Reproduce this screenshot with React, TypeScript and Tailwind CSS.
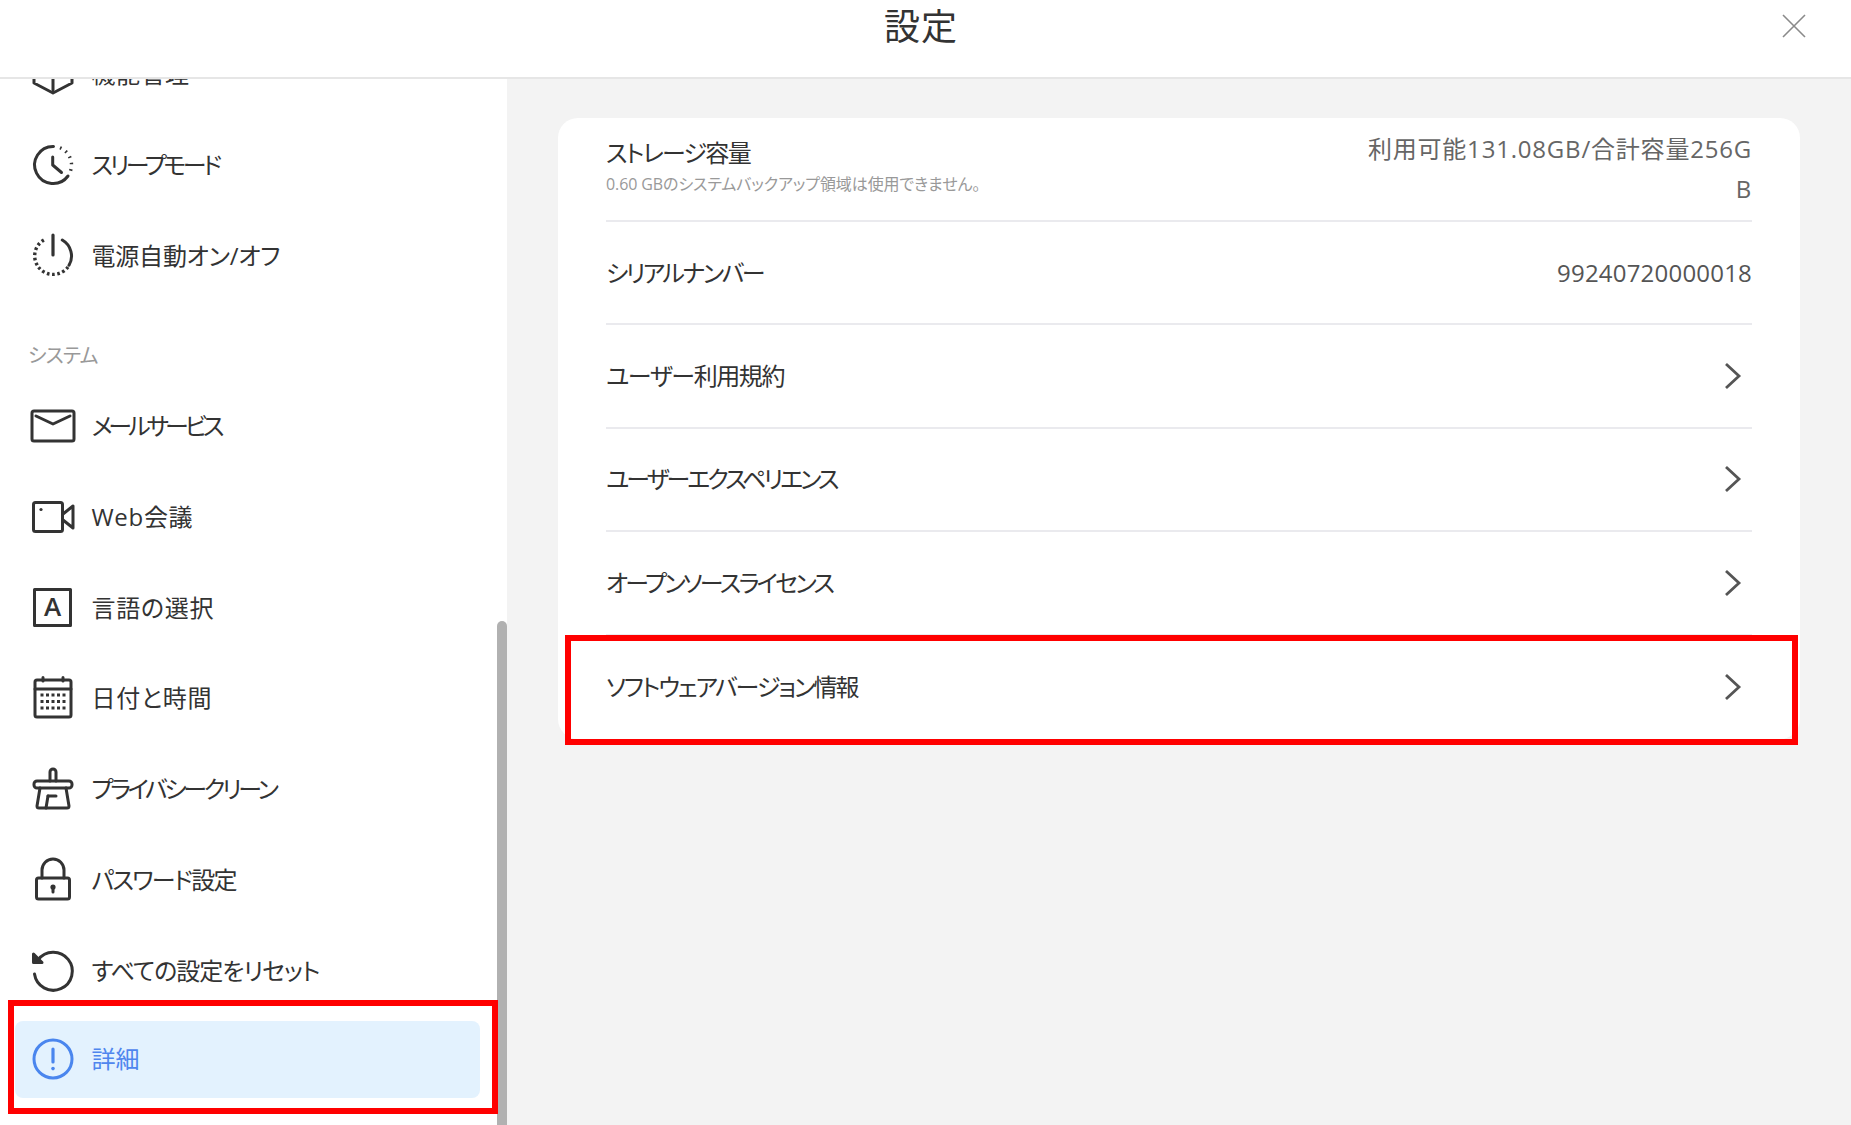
import type { ReactNode } from 'react';

const ink = '#333333';

function Icon({ children, color = ink }: { children: ReactNode; color?: string }) {
  return (
    <svg
      viewBox="0 0 48 48"
      className="h-12 w-12 shrink-0"
      fill="none"
      stroke={color}
      strokeWidth="3"
      strokeLinecap="round"
      strokeLinejoin="round"
    >
      {children}
    </svg>
  );
}

const HexIcon = (
  <Icon>
    <path d="M24 5 L43 14 V33 L24 43 L5 33 V14 Z" />
    <path d="M24 24 V40" />
  </Icon>
);

const SleepIcon = (
  <Icon>
    <path d="M24.5 5.5 A18.5 18.5 0 1 0 39 35" />
    <path d="M31 6.8 A18.5 18.5 0 0 1 41.5 30" strokeDasharray="1.6 4.9" strokeWidth="3.4" strokeLinecap="butt" />
    <path d="M23.7 16 V24 L32.5 31.5" />
  </Icon>
);

const PowerIcon = (
  <Icon>
    <path d="M33.3 8 A18.5 18.5 0 0 1 40 33.3" />
    <path d="M39 35 A18.5 18.5 0 1 1 16.7 7" strokeDasharray="2.6 2.6" strokeWidth="3.4" strokeLinecap="butt" />
    <path d="M24 3 V23" strokeWidth="3.2" />
  </Icon>
);

const MailIcon = (
  <Icon>
    <rect x="3" y="9" width="42" height="30" rx="2" />
    <path d="M7 14 L24 22 L41 14" />
  </Icon>
);

const VideoIcon = (
  <Icon>
    <rect x="4.5" y="9.5" width="29" height="29" rx="2" />
    <path d="M34 21 L44 13 V35 L34 27" />
    <circle cx="12" cy="16.5" r="1.6" fill={ink} stroke="none" />
  </Icon>
);

const LanguageIcon = (
  <Icon>
    <rect x="5.5" y="5.5" width="36" height="36" />
    <text
      x="23.5"
      y="32"
      textAnchor="middle"
      fontSize="26"
      fontWeight="600"
      fontFamily='"Open Sans", sans-serif'
      fill={ink}
      stroke="none"
    >
      A
    </text>
  </Icon>
);

const CalendarIcon = (
  <Icon>
    <rect x="6" y="6" width="36" height="37" rx="2" />
    <path d="M6 15 H42" />
    <path d="M14 3.5 V7 M34 3.5 V7" strokeWidth="3" />
    <path
      d="M13 21 h.01 M18.5 21 h.01 M24 21 h.01 M29.5 21 h.01 M35 21 h.01 M13 27.5 h.01 M18.5 27.5 h.01 M24 27.5 h.01 M29.5 27.5 h.01 M35 27.5 h.01 M13 34 h.01 M18.5 34 h.01 M24 34 h.01 M29.5 34 h.01 M35 34 h.01"
      strokeWidth="3"
      strokeLinecap="square"
    />
  </Icon>
);

const BroomIcon = (
  <Icon>
    <path d="M21 16 V7 A3 3 0 0 1 27 7 V16" />
    <rect x="5" y="16" width="38" height="7" rx="3" />
    <path d="M11 23 L8 41 Q8 43 10 43 H38 Q40 43 40 41 L37 23" />
    <path d="M19 31 L17 43" />
    <path d="M19 31 H27" />
  </Icon>
);

const LockIcon = (
  <Icon>
    <rect x="7.5" y="22" width="33" height="21" rx="2" />
    <path d="M13 22 V14 A11 11 0 0 1 35 14 V22" />
    <circle cx="24" cy="31" r="2.6" fill={ink} stroke="none" />
    <path d="M24 32 V36" />
  </Icon>
);

const ResetIcon = (
  <Icon>
    <path d="M9 13 A19 19 0 1 1 5.5 27" />
    <path d="M4.5 7 L4.5 15.5 L13 15.5 Z" fill={ink} />
  </Icon>
);

const InfoIcon = (
  <Icon color="#4a86ee">
    <circle cx="24" cy="24" r="19" />
    <path d="M24 14 V27" strokeWidth="3.2" />
    <path d="M24 33.5 V33.6" strokeWidth="3.6" />
  </Icon>
);

function SideItem({ icon, label, fit }: { icon: ReactNode; label: string; fit: string }) {
  return (
    <div className="flex h-[90.7px] items-center gap-[15px] pl-[28.5px] text-[24px] text-[#333333]">
      {icon}
      <span className={fit}>{label}</span>
    </div>
  );
}

function Chevron() {
  return (
    <svg viewBox="0 0 18 28" className="h-[28px] w-[18px]" fill="none" stroke="#555555" strokeWidth="2.8">
      <path d="M2 2 L15 14 L2 26" />
    </svg>
  );
}

function LinkRow({ label, fit, last }: { label: string; fit: string; last?: boolean }) {
  return (
    <div
      className={
        last
          ? 'flex h-[103.5px] items-center justify-between pb-[1px]'
          : 'flex h-[103.5px] items-center justify-between border-b-2 border-[#eaeaee]'
      }
    >
      <span className={fit}>{label}</span>
      <span className="mr-[10px] flex">
        <Chevron />
      </span>
    </div>
  );
}

export default function App() {
  return (
    <div className="relative flex h-[1125px] w-[1851px] flex-col overflow-hidden bg-white font-['Open_Sans','Noto_Sans_CJK_JP',sans-serif] font-normal [font-feature-settings:'palt']">
      {/* Header */}
      <header className="z-10 flex h-[79px] shrink-0 items-start justify-between border-b-2 border-[#e6e6e6] bg-white pr-[45px] pl-[884px]">
        <h1 className="mt-[1px] text-[36px] leading-[52px] tracking-[1px] text-[#333333]">設定</h1>
        <svg viewBox="0 0 24 24" className="mt-[14px] h-[24px] w-[24px]" fill="none" stroke="#8a8a8a" strokeWidth="1.6">
          <path d="M1 1 L23 23 M23 1 L1 23" />
        </svg>
      </header>

      <div className="flex min-h-0 flex-1">
        {/* Sidebar */}
        <aside className="relative w-[507px] shrink-0 overflow-hidden">
          <div className="-mt-[50px]">
            <SideItem icon={HexIcon} label="機能管理" fit="tracking-[0.5px]" />
            <SideItem icon={SleepIcon} label="スリープモード" fit="tracking-[-3.4px]" />
            <SideItem icon={PowerIcon} label="電源自動オン/オフ" fit="tracking-[-0.2px]" />
            <div className="flex h-[80px] items-end pb-[10px] pl-[28px] text-[20px] leading-[30px] tracking-[-0.8px] text-[#999999]">
              システム
            </div>
            <SideItem icon={MailIcon} label="メールサービス" fit="tracking-[-4px]" />
            <SideItem icon={VideoIcon} label="Web会議" fit="tracking-[0.7px]" />
            <SideItem icon={LanguageIcon} label="言語の選択" fit="tracking-[0.7px]" />
            <SideItem icon={CalendarIcon} label="日付と時間" fit="tracking-[0.7px]" />
            <SideItem icon={BroomIcon} label="プライバシークリーン" fit="tracking-[-3.3px]" />
            <SideItem icon={LockIcon} label="パスワード設定" fit="tracking-[-1.7px]" />
            <SideItem icon={ResetIcon} label="すべての設定をリセット" fit="tracking-[-1px]" />
            <div className="mt-[5px] ml-[15px] flex h-[77px] w-[465px] items-center gap-[15px] rounded-[8px] bg-[#e3f2fe] pl-[13.5px] text-[24px] text-[#4f86ee]">
              {InfoIcon}
              <span>詳細</span>
            </div>
          </div>
          {/* scrollbar */}
          <div className="absolute top-[542px] right-0 bottom-0 w-[10px] rounded-t-[5px] bg-[#b1b1b1]" />
        </aside>

        {/* Main */}
        <main className="flex-1 bg-[#f3f3f3] pt-[39px] pr-[51px] pl-[51px]">
          <div className="rounded-[20px] bg-white px-[48px] text-[24px] text-[#333333]">
            <div className="flex h-[103.5px] items-start justify-between border-b-2 border-[#eaeaee]">
              <div className="pt-[16px]">
                <div className="text-[24px] leading-[38px] tracking-[-1.7px]">ストレージ容量</div>
                <div className="text-[16px] leading-[24px] tracking-[-0.1px] text-[#999999]">
                  0.60 GBのシステムバックアップ領域は使用できません。
                </div>
              </div>
              <div className="w-[392px] pt-[11px] text-right leading-[40px] tracking-[0.8px] break-all text-[#666666]">
                利用可能131.08GB/合計容量256GB
              </div>
            </div>
            <div className="flex h-[103.5px] items-center justify-between border-b-2 border-[#eaeaee] pt-[2px]">
              <span className="tracking-[-2.5px]">シリアルナンバー</span>
              <span className="tracking-[0.2px] text-[#555555]">99240720000018</span>
            </div>
            <LinkRow label="ユーザー利用規約" fit="tracking-[-1.4px]" />
            <LinkRow label="ユーザーエクスペリエンス" fit="tracking-[-3px]" />
            <LinkRow label="オープンソースライセンス" fit="tracking-[-2.7px]" />
            <LinkRow label="ソフトウェアバージョン情報" fit="tracking-[-2px]" last />
          </div>
        </main>
      </div>

      {/* Red annotation boxes */}
      <div className="absolute top-[1000px] left-[8px] h-[114px] w-[490px] border-[6px] border-[#ff0000]" />
      <div className="absolute top-[635px] left-[565px] h-[110px] w-[1233px] border-[6px] border-[#ff0000]" />
    </div>
  );
}
